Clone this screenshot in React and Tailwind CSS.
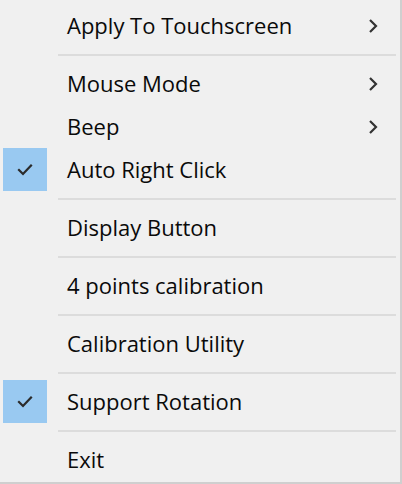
import React from 'react';

const ITEMS = [
  { label: 'Apply To Touchscreen', sub: true },
  { sep: true },
  { label: 'Mouse Mode', sub: true },
  { label: 'Beep', sub: true },
  { label: 'Auto Right Click', checked: true },
  { sep: true },
  { label: 'Display Button' },
  { sep: true },
  { label: '4 points calibration' },
  { sep: true },
  { label: 'Calibration Utility' },
  { sep: true },
  { label: 'Support Rotation', checked: true },
  { sep: true },
  { label: 'Exit' },
];

function Check() {
  return (
    <svg width="16" height="13" viewBox="0 0 16 13" fill="none">
      <path d="M2 7 L6 11 L14 2.5" stroke="#2b2b2b" strokeWidth="2.2" strokeLinecap="square" />
    </svg>
  );
}

function Chevron() {
  return (
    <svg width="10" height="16" viewBox="0 0 10 16" fill="none">
      <path d="M2 2 L8 8 L2 14" stroke="#333" strokeWidth="2.2" />
    </svg>
  );
}

export default function App() {
  return (
    <div
      className="w-[402px] h-[484px] bg-[#f0f0f0] border-r-2 border-b-2 border-[#cfcfcf] pt-[4px] text-[#0a0a0a] text-[22px]"
      style={{ fontFamily: '"Open Sans", "Noto Sans", sans-serif' }}
    >
      {ITEMS.map((item, i) =>
        item.sep ? (
          <div key={i} className="h-[15px] flex items-center pl-[58px] pr-[4px]">
            <div className="h-[2px] w-full bg-[#dcdcdc]" />
          </div>
        ) : (
          <div key={i} className="h-[43px] flex items-center">
            <div className="w-[58px] h-full pl-[3px] flex items-center">
              {item.checked && (
                <div className="w-[44px] h-[43px] bg-[#99c9f1] flex items-center justify-center">
                  <Check />
                </div>
              )}
            </div>
            <span className="flex-1 pl-[9px]">{item.label}</span>
            {item.sub && (
              <div className="w-[52px] flex justify-center pr-[2px]">
                <Chevron />
              </div>
            )}
          </div>
        )
      )}
    </div>
  );
}
